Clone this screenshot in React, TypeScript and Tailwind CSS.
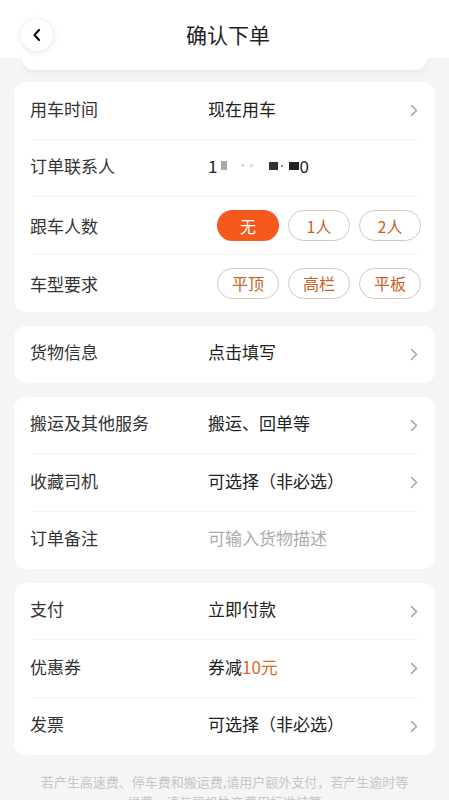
import React from "react";

const font = { fontFamily: '"Noto Sans CJK SC", "Noto Sans", sans-serif' };

function Chevron() {
  return (
    <svg width="8" height="13" viewBox="0 0 8 13" className="shrink-0">
      <path d="M1.5 1.5 L6.5 6.5 L1.5 11.5" fill="none" stroke="#9b9b9b" strokeWidth="1.4" strokeLinecap="round" strokeLinejoin="round" />
    </svg>
  );
}

function Row({ label, children, chevron = true, last = false }: { label: string; children: React.ReactNode; chevron?: boolean; last?: boolean }) {
  return (
    <div className="relative flex h-[57.5px] items-center pl-4 pr-[17px]">
      <div className="w-[178px] shrink-0 pb-[5px] text-[17px] text-[#333]">{label}</div>
      <div className="flex-1 pb-[5px] text-[17px] text-[#222]">{children}</div>
      {chevron && <Chevron />}
      {!last && <div className="absolute bottom-0 left-[18px] right-[16px] h-px bg-[#f4f4f4]" />}
    </div>
  );
}

function Pill({ text, active = false }: { text: string; active?: boolean }) {
  return (
    <div
      className={
        active
          ? "flex h-[31px] w-[62px] items-center justify-center rounded-full bg-[#f5591c] text-[16px] text-white"
          : "flex h-[31px] w-[62px] items-center justify-center rounded-full border border-[#dcc4b6] text-[16px] text-[#c8602b]"
      }
    >
      {text}
    </div>
  );
}

function PillRow({ label, items, activeIndex = -1, last = false }: { label: string; items: string[]; activeIndex?: number; last?: boolean }) {
  return (
    <div className="relative flex h-[57.5px] items-center pl-4 pr-[13px]">
      <div className="w-[187px] shrink-0 text-[17px] text-[#333]">{label}</div>
      <div className="flex gap-[9px]">
        {items.map((t, i) => (
          <Pill key={t} text={t} active={i === activeIndex} />
        ))}
      </div>
      {!last && <div className="absolute bottom-0 left-[18px] right-[16px] h-px bg-[#f4f4f4]" />}
    </div>
  );
}

export default function App() {
  return (
    <div className="h-[800px] w-[449px] overflow-hidden bg-[#f5f5f5]" style={font}>
      <div className="relative z-10 flex h-[58px] items-center bg-white px-[21px] pt-[12px]">
        <div className="flex h-[32px] w-[32px] items-center justify-center rounded-full bg-white shadow-[0_1px_6px_rgba(0,0,0,0.12)]">
          <svg width="10" height="14" viewBox="0 0 10 14">
            <path d="M7 2 L2.5 7 L7 12" fill="none" stroke="#111" strokeWidth="2.2" strokeLinecap="round" strokeLinejoin="round" />
          </svg>
        </div>
        <div className="pointer-events-none absolute left-0 right-0 top-[12px] flex h-[46px] items-center justify-center pl-[7px]">
          <span className="text-[21px] text-[#222]">确认下单</span>
        </div>
      </div>
      <div className="mx-[22px] h-[12px] rounded-b-[14px] bg-white shadow-[0_3px_6px_rgba(0,0,0,0.05)]" />

      <div className="mt-[12px] flex flex-col gap-[13.5px] px-[14px]">
        <div className="rounded-[12px] bg-white">
          <Row label="用车时间">现在用车</Row>
          <Row label="订单联系人" chevron={false}>
            <span className="inline-flex items-center">
              <span>1</span>
              <span className="ml-[4px] inline-block h-[9px] w-[6px] bg-[#aaa]" />
              <span className="ml-[14px] inline-block h-[3px] w-[3px] bg-[#ddd]" />
              <span className="ml-[6px] inline-block h-[3px] w-[3px] bg-[#ddd]" />
              <span className="ml-[16px] inline-block h-[8px] w-[9px] bg-[#333]" />
              <span className="ml-[3px] inline-block h-[2px] w-[2px] bg-[#888]" />
              <span className="ml-[6px] inline-block h-[8px] w-[10px] bg-[#222]" />
              <span>0</span>
            </span>
          </Row>
          <PillRow label="跟车人数" items={["无", "1人", "2人"]} activeIndex={0} />
          <PillRow label="车型要求" items={["平顶", "高栏", "平板"]} last />
        </div>

        <div className="rounded-[12px] bg-white">
          <Row label="货物信息" last>点击填写</Row>
        </div>

        <div className="rounded-[12px] bg-white">
          <Row label="搬运及其他服务">搬运、回单等</Row>
          <Row label="收藏司机">可选择（非必选）</Row>
          <Row label="订单备注" chevron={false} last>
            <span className="text-[#ababab]">可输入货物描述</span>
          </Row>
        </div>

        <div className="rounded-[12px] bg-white">
          <Row label="支付">立即付款</Row>
          <Row label="优惠券">
            券减<span className="text-[#d8672c]">10元</span>
          </Row>
          <Row label="发票" last>可选择（非必选）</Row>
        </div>
      </div>

      <div className="mt-[17px] px-[20px] text-center text-[13px] leading-[20px] text-[#c6c6c6]">
        若产生高速费、停车费和搬运费,请用户额外支付，若产生逾时等
        <br />
        候费，请与司机协商费用标准结算
      </div>
    </div>
  );
}
